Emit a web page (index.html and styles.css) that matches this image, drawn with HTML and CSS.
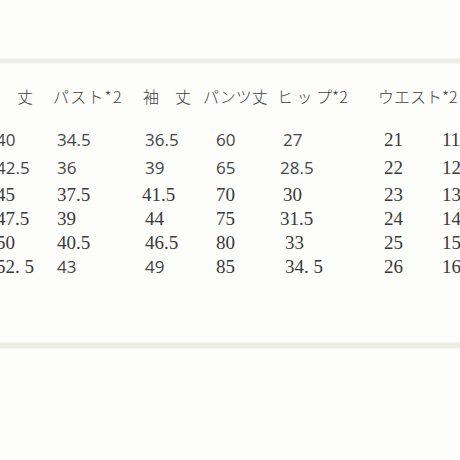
FILE: index.html
```html
<!DOCTYPE html>
<html lang="ja">
<head>
<meta charset="utf-8">
<title>サイズ表</title>
<link rel="stylesheet" href="styles.css">
</head>
<body>
<div class="chart">
  <div class="rule rule-top"></div>
  <div class="head">
    <span>丈</span>
    <span class="wide">パスト*2</span>
    <span>袖　丈</span>
    <span>パンツ丈</span>
    <span class="spaced">ヒ ッ プ*2</span>
    <span>ウエスト*2</span>
  </div>
  <div class="rows">
    <div class="row r1">
      <span class="s">40</span><span class="s">34.5</span><span class="s">36.5</span><span class="s">60</span><span class="s">27</span><span class="f">21</span><span class="f">11</span>
    </div>
    <div class="row r2">
      <span class="s">42.5</span><span class="s">36</span><span class="s">39</span><span class="s">65</span><span class="s nudge-l">28.5</span><span class="f">22</span><span class="f">12</span>
    </div>
    <div class="row r3">
      <span class="f">45</span><span class="f">37.5</span><span class="f nudge-l">41.5</span><span class="f">70</span><span class="f">30</span><span class="f">23</span><span class="f">13</span>
    </div>
    <div class="row">
      <span class="f">47.5</span><span class="f">39</span><span class="f">44</span><span class="f">75</span><span class="f nudge-l">31.5</span><span class="f">24</span><span class="f">14</span>
    </div>
    <div class="row">
      <span class="f">50</span><span class="f">40.5</span><span class="f">46.5</span><span class="f">80</span><span class="f nudge-r">33</span><span class="f">25</span><span class="f">15</span>
    </div>
    <div class="row">
      <span class="f">52. 5</span><span class="s">43</span><span class="s">49</span><span class="f">85</span><span class="f nudge-r">34. 5</span><span class="f">26</span><span class="f">16</span>
    </div>
  </div>
  <div class="rule rule-bottom"></div>
</div>
</body>
</html>
```
FILE: styles.css
```css
html, body {
  margin: 0;
  padding: 0;
  background: #fdfdfb;
  overflow: hidden;
}

.chart {
  width: 460px;
  height: 460px;
  overflow: hidden;
  color: #3d3d3d;
}

.rule {
  height: 4px;
  background: #ededE6;
  box-shadow: 0 0 1px 1px #f5f5f1;
}

.rule-top {
  margin-top: 59px;
}

.rule-bottom {
  margin-top: 64px;
  height: 5px;
}

.head {
  margin-top: 21px;
  margin-left: 17px;
  display: grid;
  grid-template-columns: 36px 90px 60px 74px 101px auto;
  font-family: "Noto Sans CJK JP", sans-serif;
  font-weight: 300;
  font-size: 16px;
  line-height: 24px;
  color: #404040;
  white-space: nowrap;
}

.wide {
  letter-spacing: 1.2px;
}

.spaced {
  word-spacing: 0;
}

.rows {
  margin-top: 20px;
  margin-left: -4px;
}

.row {
  display: grid;
  grid-template-columns: 61px 88px 71px 67px 101px 58px 60px;
  height: 24px;
  line-height: 24px;
  white-space: nowrap;
}

.r2 {
  margin-top: 4px;
}

.r3 {
  margin-top: 3px;
}

.s {
  font-family: "Open Sans", "Noto Sans", sans-serif;
  font-size: 17px;
  color: #454545;
}

.f {
  font-family: "Liberation Serif", serif;
  font-size: 19px;
  color: #3a3a3a;
}

.nudge-l {
  margin-left: -3px;
}

.nudge-r {
  margin-left: 2px;
}
```
